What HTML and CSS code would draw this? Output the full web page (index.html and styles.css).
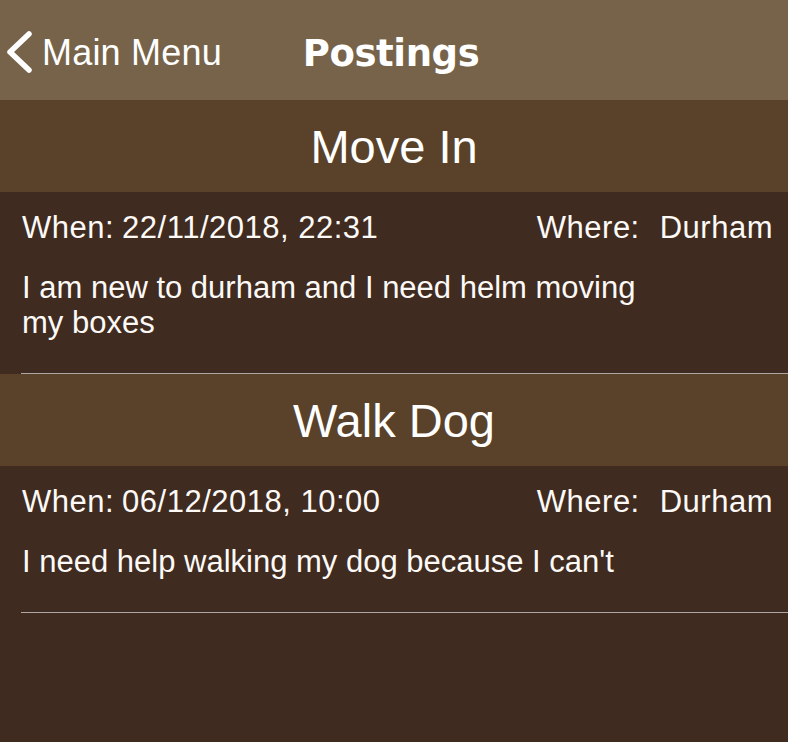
FILE: index.html
```html
<!DOCTYPE html>
<html lang="en">
<head>
<meta charset="utf-8">
<title>Postings</title>
<link rel="stylesheet" href="styles.css">
</head>
<body>
<header class="navbar">
  <a class="back" href="#">
    <svg class="chevron" width="30" height="46" viewBox="0 0 30 46" aria-hidden="true">
      <polyline points="25,5 6,23 25,41" fill="none" stroke="#ffffff" stroke-width="5.5" stroke-linecap="round" stroke-linejoin="round"/>
    </svg>
    <span class="back-label">Main Menu</span>
  </a>
  <h1 class="title">Postings</h1>
  <span class="spacer"></span>
</header>

<main class="list">
  <section class="posting">
    <h2 class="posting-title">Move In</h2>
    <div class="posting-body">
      <div class="meta">
        <div class="meta-group"><span>When:</span><span>22/11/2018, 22:31</span></div>
        <div class="meta-group where"><span>Where:</span><span>Durham</span></div>
      </div>
      <p class="desc">I am new to durham and I need helm moving my boxes</p>
    </div>
  </section>
  <section class="posting">
    <h2 class="posting-title">Walk Dog</h2>
    <div class="posting-body">
      <div class="meta">
        <div class="meta-group"><span>When:</span><span>06/12/2018, 10:00</span></div>
        <div class="meta-group where"><span>Where:</span><span>Durham</span></div>
      </div>
      <p class="desc">I need help walking my dog because I can't</p>
    </div>
  </section>
</main>
</body>
</html>
```

FILE: styles.css
```css
html, body {
  margin: 0;
  padding: 0;
}

body {
  background: #3f2b20;
  color: #fdf9f6;
  font-family: "Liberation Sans", Arial, sans-serif;
  width: 788px;
  height: 742px;
  overflow: hidden;
}

.navbar {
  box-sizing: border-box;
  height: 100px;
  padding-top: 6px;
  background: #776349;
  display: grid;
  grid-template-columns: 1fr auto 1fr;
  align-items: center;
}

.back {
  display: flex;
  align-items: center;
  gap: 8px;
  padding-left: 4px;
  color: #ffffff;
  text-decoration: none;
  margin-top: -6px;
}

.chevron {
  display: block;
  margin-top: 4px;
}

.back-label {
  font-size: 36px;
  letter-spacing: 0.2px;
  padding-top: 6px;
}

.title {
  margin: 0;
  font-family: "DejaVu Sans", sans-serif;
  font-weight: bold;
  font-size: 37px;
  letter-spacing: -0.4px;
  color: #ffffff;
  margin-left: -6px;
}

.list {
  display: flex;
  flex-direction: column;
}

.posting-title {
  margin: 0;
  height: 92px;
  display: flex;
  align-items: center;
  justify-content: center;
  background: #5a422a;
  font-weight: normal;
  font-size: 47px;
  color: #ffffff;
}

.posting-body {
  margin-left: 21px;
  padding: 18px 0 33px 1px;
  border-bottom: 1px solid #aea6a4;
  font-size: 31px;
  line-height: 35px;
}

.meta {
  display: flex;
  justify-content: space-between;
  padding-right: 15px;
  letter-spacing: 0.5px;
}

.meta-group {
  display: flex;
  gap: 8px;
}

.meta-group.where {
  gap: 20px;
}

.desc {
  margin: 25px 0 0;
  max-width: 640px;
}
```
